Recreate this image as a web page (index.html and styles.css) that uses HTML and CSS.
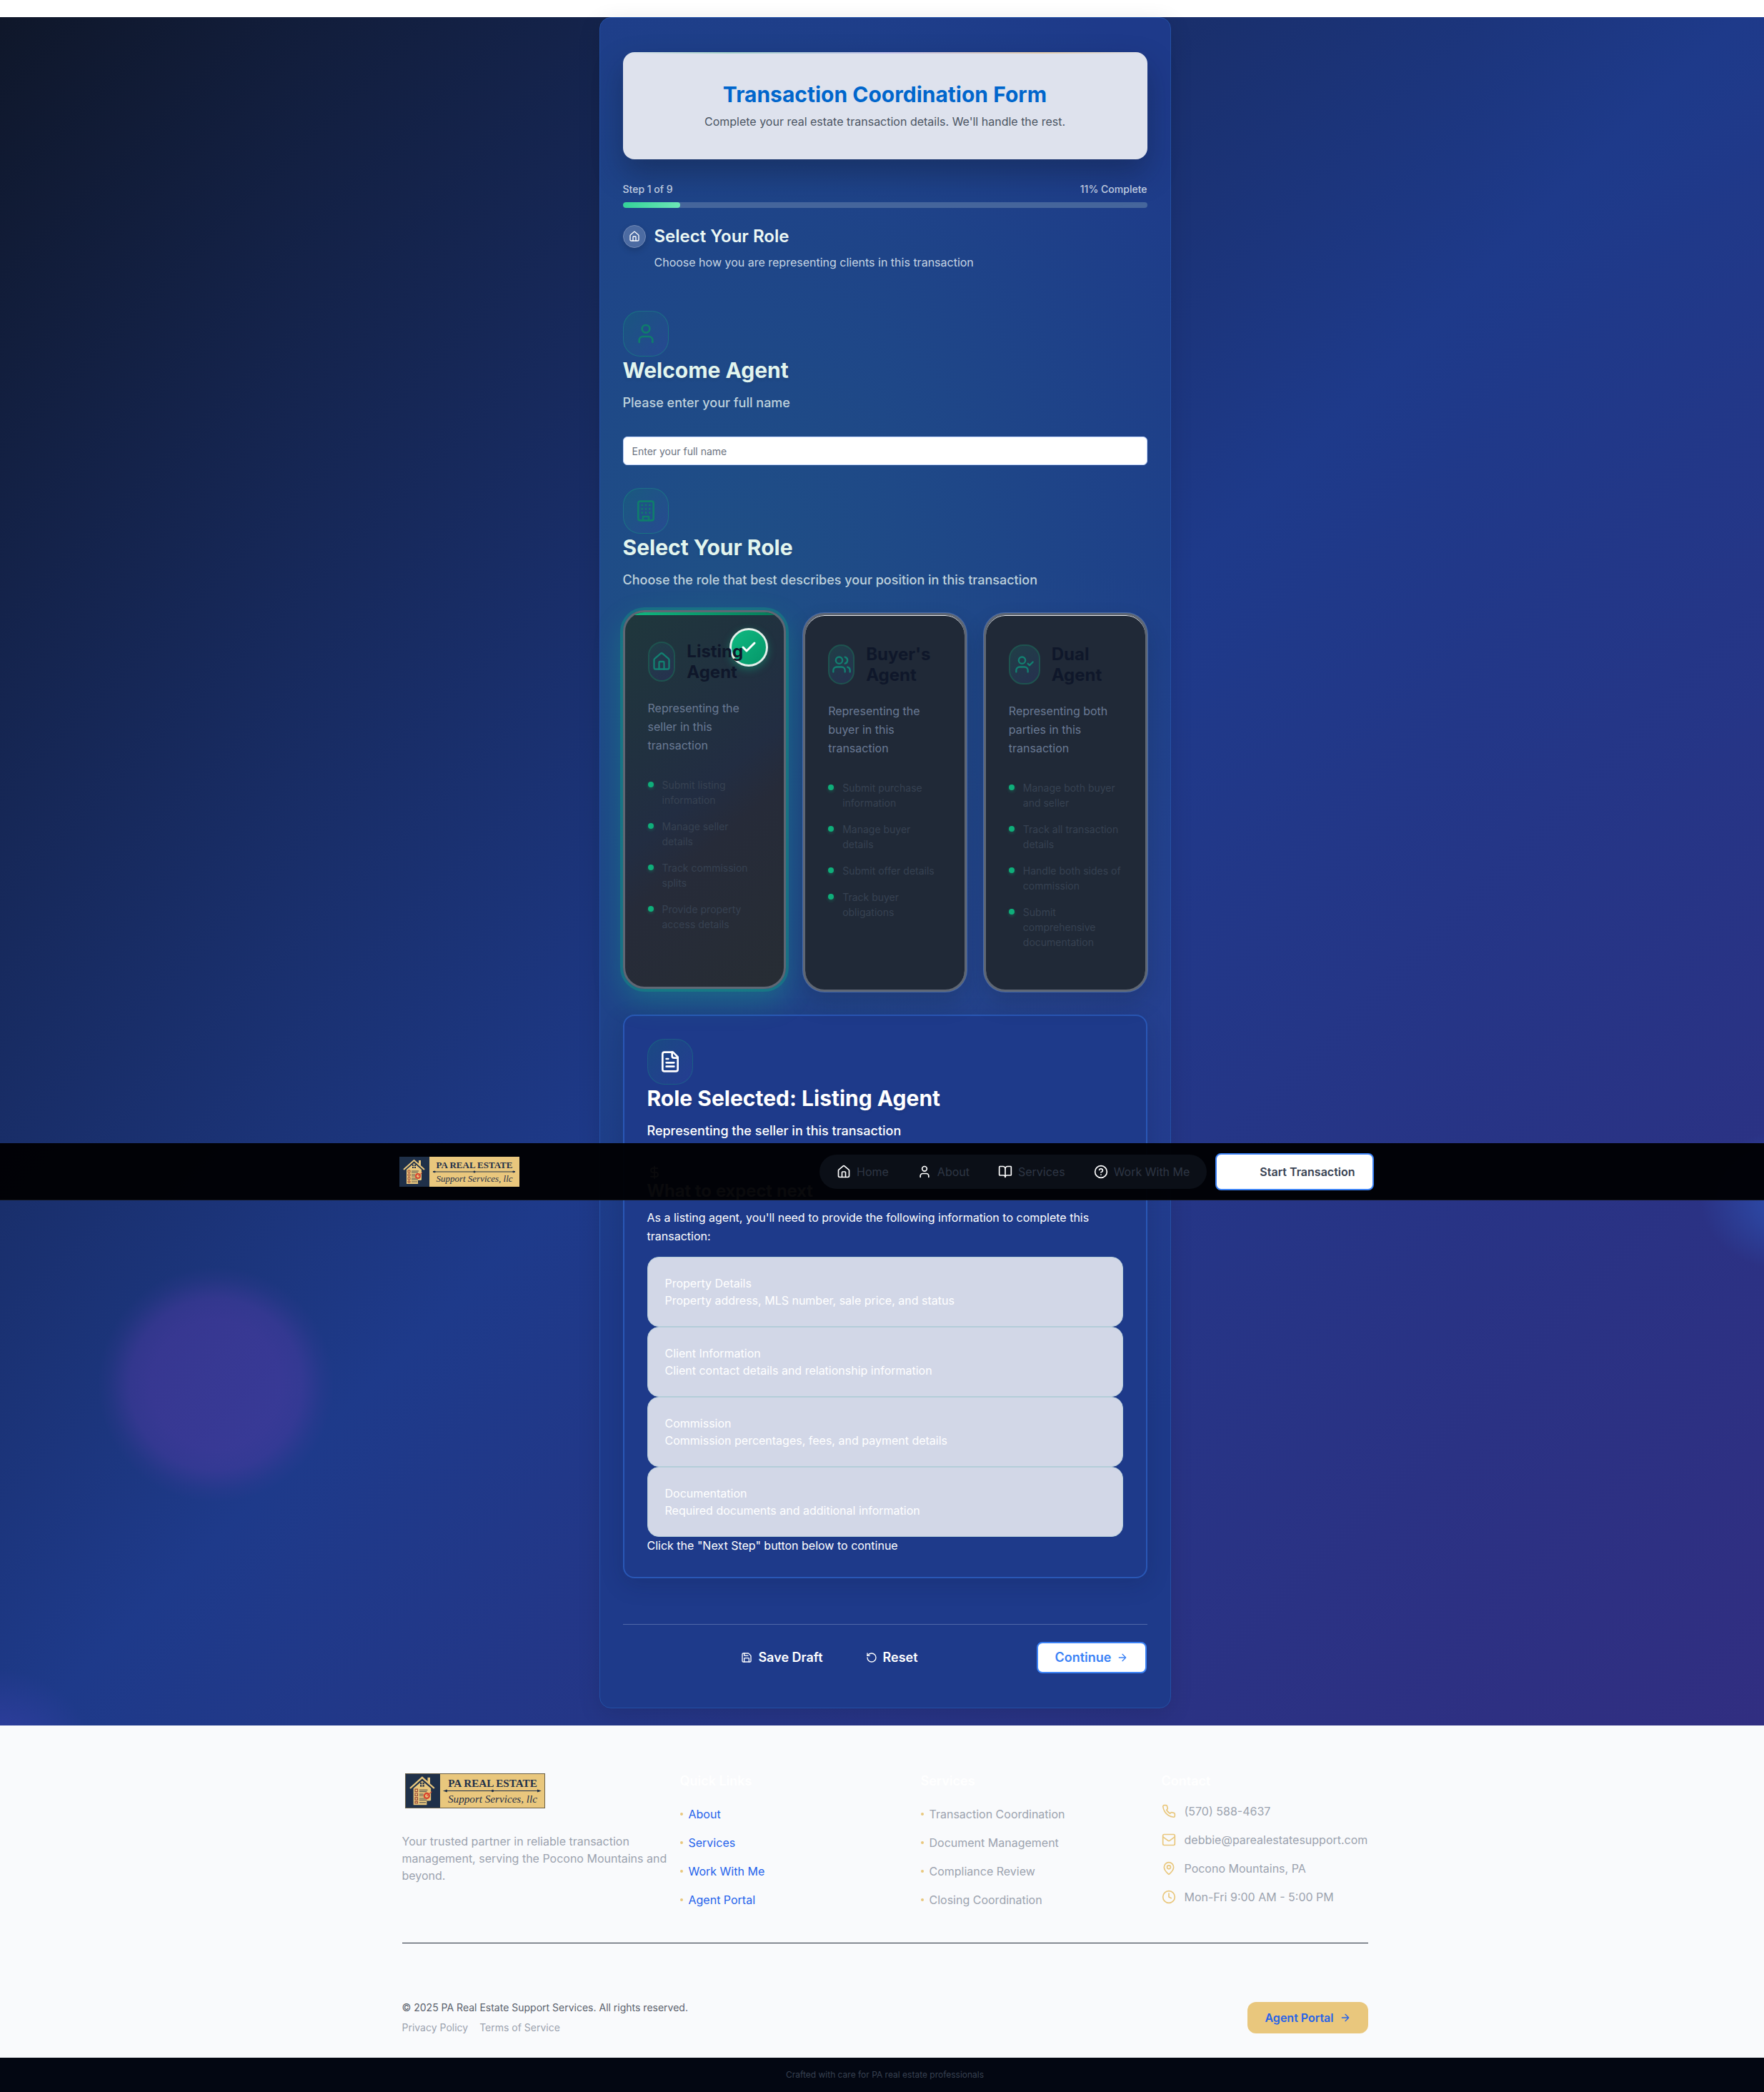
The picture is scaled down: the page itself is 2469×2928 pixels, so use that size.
FILE: index.html
```html
<!DOCTYPE html>
<html lang="en">
<head>
<meta charset="utf-8">
<meta name="viewport" content="width=device-width, initial-scale=1">
<title>Transaction Coordination Form | PA Real Estate Support Services</title>
<link rel="stylesheet" href="styles.css">
</head>
<body>
<svg class="sprite" aria-hidden="true">
  <symbol id="i-home" viewBox="0 0 24 24"><path d="M15 21v-8a1 1 0 0 0-1-1h-4a1 1 0 0 0-1 1v8"/><path d="M3 10a2 2 0 0 1 .709-1.528l7-5.999a2 2 0 0 1 2.582 0l7 5.999A2 2 0 0 1 21 10v9a2 2 0 0 1-2 2H5a2 2 0 0 1-2-2z"/></symbol>
  <symbol id="i-user" viewBox="0 0 24 24"><path d="M19 21v-2a4 4 0 0 0-4-4H9a4 4 0 0 0-4 4v2"/><circle cx="12" cy="7" r="4"/></symbol>
  <symbol id="i-building" viewBox="0 0 24 24"><rect x="4" y="2" width="16" height="20" rx="2"/><path d="M9 22v-4h6v4M8 6h.01M16 6h.01M12 6h.01M12 10h.01M12 14h.01M16 10h.01M16 14h.01M8 10h.01M8 14h.01"/></symbol>
  <symbol id="i-users" viewBox="0 0 24 24"><path d="M16 21v-2a4 4 0 0 0-4-4H6a4 4 0 0 0-4 4v2"/><circle cx="9" cy="7" r="4"/><path d="M22 21v-2a4 4 0 0 0-3-3.87M16 3.13a4 4 0 0 1 0 7.75"/></symbol>
  <symbol id="i-user-check" viewBox="0 0 24 24"><path d="M16 21v-2a4 4 0 0 0-4-4H6a4 4 0 0 0-4 4v2"/><circle cx="9" cy="7" r="4"/><path d="m16 11 2 2 4-4"/></symbol>
  <symbol id="i-file" viewBox="0 0 24 24"><path d="M15 2H6a2 2 0 0 0-2 2v16a2 2 0 0 0 2 2h12a2 2 0 0 0 2-2V7Z"/><path d="M14 2v4a2 2 0 0 0 2 2h4M10 9H8M16 13H8M16 17H8"/></symbol>
  <symbol id="i-check" viewBox="0 0 24 24"><path d="M20 6 9 17l-5-5"/></symbol>
  <symbol id="i-dollar" viewBox="0 0 24 24"><path d="M12 2v20M17 5H9.500a3.500 3.500 0 0 0 0 7h5a3.500 3.500 0 0 1 0 7H6"/></symbol>
  <symbol id="i-book" viewBox="0 0 24 24"><path d="M12 7v14"/><path d="M3 18a1 1 0 0 1-1-1V4a1 1 0 0 1 1-1h5a4 4 0 0 1 4 4 4 4 0 0 1 4-4h5a1 1 0 0 1 1 1v13a1 1 0 0 1-1 1h-6a3 3 0 0 0-3 3 3 3 0 0 0-3-3z"/></symbol>
  <symbol id="i-help" viewBox="0 0 24 24"><circle cx="12" cy="12" r="10"/><path d="M9.090 9a3 3 0 0 1 5.830 1c0 2-3 3-3 3M12 17h.01"/></symbol>
  <symbol id="i-save" viewBox="0 0 24 24"><path d="M15.200 3a2 2 0 0 1 1.400.6l3.800 3.800a2 2 0 0 1 .6 1.400V19a2 2 0 0 1-2 2H5a2 2 0 0 1-2-2V5a2 2 0 0 1 2-2z"/><path d="M17 21v-7a1 1 0 0 0-1-1H8a1 1 0 0 0-1 1v7M7 3v4a1 1 0 0 0 1 1h7"/></symbol>
  <symbol id="i-reset" viewBox="0 0 24 24"><path d="M3 12a9 9 0 1 0 9-9 9.750 9.750 0 0 0-6.740 2.740L3 8"/><path d="M3 3v5h5"/></symbol>
  <symbol id="i-arrow" viewBox="0 0 24 24"><path d="M5 12h14M12 5l7 7-7 7"/></symbol>
  <symbol id="i-phone" viewBox="0 0 24 24"><path d="M22 16.920v3a2 2 0 0 1-2.180 2 19.790 19.790 0 0 1-8.630-3.070 19.500 19.500 0 0 1-6-6 19.790 19.790 0 0 1-3.070-8.670A2 2 0 0 1 4.110 2h3a2 2 0 0 1 2 1.720 12.840 12.840 0 0 0 .7 2.810 2 2 0 0 1-.45 2.110L8.090 9.910a16 16 0 0 0 6 6l1.270-1.270a2 2 0 0 1 2.110-.45 12.840 12.840 0 0 0 2.810.7A2 2 0 0 1 22 16.920z"/></symbol>
  <symbol id="i-mail" viewBox="0 0 24 24"><rect x="2" y="3" width="20" height="18" rx="2"/><path d="m22 7-8.970 6.700a1.940 1.940 0 0 1-2.060 0L2 7"/></symbol>
  <symbol id="i-pin" viewBox="0 0 24 24"><path d="M20 10c0 5-5.540 10.190-7.400 11.800a1 1 0 0 1-1.200 0C9.540 20.190 4 15 4 10a8 8 0 0 1 16 0"/><circle cx="12" cy="10" r="3"/></symbol>
  <symbol id="i-clock" viewBox="0 0 24 24"><circle cx="12" cy="12" r="10"/><path d="M12 6v6l4 2"/></symbol>
  <symbol id="logo" viewBox="0 0 168 42">
    <rect width="168" height="42" fill="#e9c77d"/>
    <rect width="42" height="42" fill="#1f3049"/>
    <path d="M27 5h3v7h-3z" fill="#e9c77d"/>
    <path d="m6 18 14.500-13L35 18" fill="none" stroke="#e9c77d" stroke-width="2"/>
    <path d="M10 18 20.500 9 31 18v14l-5 6H10z" fill="#e9c77d"/>
    <path d="M18 11h5v5h-5z" fill="#1f3049"/>
    <path d="M20.500 11v5M18 13.500h5" stroke="#e9c77d" stroke-width="1"/>
    <path d="M17 20h10M17 22h9M17 25h5M17 27h5M17 30h7M17 32h9M17 35h8" stroke="#5b5a52" stroke-width="1"/>
    <path d="M12 19h3v3h-3zM12 24h3v3h-3zM12 29h3v3h-3zM12 34h3v2h-3z" fill="none" stroke="#9a4a38" stroke-width="1"/>
    <circle cx="26" cy="27" r="3" fill="none" stroke="#d8452f" stroke-width="2"/>
    <path d="m26 27 6-5" stroke="#d8452f" stroke-width="1"/>
    <path d="M26 38v-5h5z" fill="#1f3049"/>
    <text x="105" y="16" text-anchor="middle" class="logo-name">PA REAL ESTATE</text>
    <path d="M47 21h115M47 21l3-1v2zM162 21l-3-1v2z" stroke="#1f3049" stroke-width="1" fill="#1f3049"/>
    <circle cx="105" cy="21" r="1.500" fill="#1f3049"/>
    <text x="105" y="35" text-anchor="middle" class="logo-script">Support Services, llc</text>
  </symbol>
</svg>

<div class="page">
  <header class="navbar">
    <div class="navbar-inner">
      <a class="brand" href="#"><svg class="logo-sm" role="img" aria-label="PA Real Estate Support Services, llc"><use href="#logo"/></svg></a>
      <nav class="nav-pill">
        <a href="#"><svg class="icon s20"><use href="#i-home"/></svg><span>Home</span></a>
        <a href="#"><svg class="icon s20"><use href="#i-user"/></svg><span>About</span></a>
        <a href="#"><svg class="icon s20"><use href="#i-book"/></svg><span>Services</span></a>
        <a href="#"><svg class="icon s20"><use href="#i-help"/></svg><span>Work With Me</span></a>
      </nav>
      <a class="cta" href="#">Start Transaction</a>
    </div>
  </header>

  <main class="stage">
    <form class="shell">
      <div class="form-head">
        <h1>Transaction Coordination Form</h1>
        <p>Complete your real estate transaction details. We'll handle the rest.</p>
      </div>

      <div class="progress">
        <div class="progress-labels"><span>Step 1 of 9</span><span>11% Complete</span></div>
        <div class="track"><div class="fill" style="width:11%"></div></div>
        <div class="step">
          <span class="step-icon"><svg class="icon s16"><use href="#i-home"/></svg></span>
          <h2>Select Your Role</h2>
          <p>Choose how you are representing clients in this transaction</p>
        </div>
      </div>

      <section class="block">
        <span class="tile"><svg class="icon s32"><use href="#i-user"/></svg></span>
        <h2 class="title">Welcome Agent</h2>
        <p class="sub" id="name-label">Please enter your full name</p>
        <input class="field" type="text" aria-labelledby="name-label" placeholder="Enter your full name">
      </section>

      <section class="block">
        <span class="tile"><svg class="icon s32"><use href="#i-building"/></svg></span>
        <h2 class="title">Select Your Role</h2>
        <p class="sub">Choose the role that best describes your position in this transaction</p>
        <div class="roles">
          <label class="role selected">
            <input type="radio" name="role" checked>
            <span class="badge"><svg class="icon s24"><use href="#i-check"/></svg></span>
            <span class="role-head"><span class="role-icon"><svg class="icon s28"><use href="#i-home"/></svg></span><span class="role-name">Listing Agent</span></span>
            <span class="role-desc">Representing the seller in this transaction</span>
            <span class="role-list"><span>Submit listing information</span><span>Manage seller details</span><span>Track commission splits</span><span>Provide property access details</span></span>
          </label>
          <label class="role">
            <input type="radio" name="role">
            <span class="role-head"><span class="role-icon"><svg class="icon s28"><use href="#i-users"/></svg></span><span class="role-name">Buyer's Agent</span></span>
            <span class="role-desc">Representing the buyer in this transaction</span>
            <span class="role-list"><span>Submit purchase information</span><span>Manage buyer details</span><span>Submit offer details</span><span>Track buyer obligations</span></span>
          </label>
          <label class="role">
            <input type="radio" name="role">
            <span class="role-head"><span class="role-icon"><svg class="icon s28"><use href="#i-user-check"/></svg></span><span class="role-name">Dual Agent</span></span>
            <span class="role-desc">Representing both parties in this transaction</span>
            <span class="role-list"><span>Manage both buyer and seller</span><span>Track all transaction details</span><span>Handle both sides of commission</span><span>Submit comprehensive documentation</span></span>
          </label>
        </div>
      </section>

      <section class="panel">
        <span class="tile"><svg class="icon s32"><use href="#i-file"/></svg></span>
        <h2 class="title">Role Selected: Listing Agent</h2>
        <p class="sub">Representing the seller in this transaction</p>
        <svg class="icon s20 dollar"><use href="#i-dollar"/></svg>
        <h3>What to expect next</h3>
        <p class="lead">As a listing agent, you'll need to provide the following information to complete this transaction:</p>
        <div class="info"><h4>Property Details</h4><p>Property address, MLS number, sale price, and status</p></div>
        <div class="info"><h4>Client Information</h4><p>Client contact details and relationship information</p></div>
        <div class="info"><h4>Commission</h4><p>Commission percentages, fees, and payment details</p></div>
        <div class="info"><h4>Documentation</h4><p>Required documents and additional information</p></div>
        <p>Click the "Next Step" button below to continue</p>
      </section>

      <div class="actions">
        <span></span>
        <div class="actions-mid">
          <button type="button" class="btn"><svg class="icon s16"><use href="#i-save"/></svg>Save Draft</button>
          <button type="reset" class="btn"><svg class="icon s16"><use href="#i-reset"/></svg>Reset</button>
        </div>
        <button type="submit" class="btn primary">Continue<svg class="icon s16"><use href="#i-arrow"/></svg></button>
      </div>
    </form>
  </main>

  <footer class="footer">
    <div class="footer-inner">
      <div class="footer-grid">
        <div>
          <svg class="logo-lg" role="img" aria-label="PA Real Estate Support Services, llc"><use href="#logo"/></svg>
          <p class="about">Your trusted partner in reliable transaction management, serving the Pocono Mountains and beyond.</p>
        </div>
        <div>
          <h3>Quick Links</h3>
          <ul class="links blue"><li><a href="#">About</a></li><li><a href="#">Services</a></li><li><a href="#">Work With Me</a></li><li><a href="#">Agent Portal</a></li></ul>
        </div>
        <div>
          <h3>Services</h3>
          <ul class="links"><li>Transaction Coordination</li><li>Document Management</li><li>Compliance Review</li><li>Closing Coordination</li></ul>
        </div>
        <div>
          <h3>Contact</h3>
          <ul class="contact">
            <li><svg class="icon s20"><use href="#i-phone"/></svg>(570) 588-4637</li>
            <li><svg class="icon s20"><use href="#i-mail"/></svg>debbie@parealestatesupport.com</li>
            <li><svg class="icon s20"><use href="#i-pin"/></svg>Pocono Mountains, PA</li>
            <li><svg class="icon s20"><use href="#i-clock"/></svg>Mon-Fri 9:00 AM - 5:00 PM</li>
          </ul>
        </div>
      </div>
      <div class="footer-bottom">
        <div>
          <p class="copy">© 2025 PA Real Estate Support Services. All rights reserved.</p>
          <p class="legal"><a href="#">Privacy Policy</a><a href="#">Terms of Service</a></p>
        </div>
        <a class="portal" href="#">Agent Portal<svg class="icon s16"><use href="#i-arrow"/></svg></a>
      </div>
    </div>
    <div class="credit">Crafted with care for PA real estate professionals</div>
  </footer>
</div>
</body>
</html>
```
FILE: styles.css
```css
*, *::before, *::after { box-sizing: border-box; }
html { overflow-x: hidden; }
body { margin: 0; background: #fff; font-family: Inter, "Liberation Sans", sans-serif; font-size: 16px; line-height: 24px; overflow-x: hidden; }
h1, h2, h3, h4, p, ul { margin: 0; padding: 0; }
ul { list-style: none; }
a { color: inherit; text-decoration: none; }
.sprite { display: none; }
.page { position: relative; padding-top: 24px; margin-right: -8px; }

.icon { display: block; flex: none; fill: none; stroke: currentColor; stroke-width: 2; stroke-linecap: round; stroke-linejoin: round; }
.s16 { width: 16px; height: 16px; }
.s20 { width: 20px; height: 20px; }
.s24 { width: 24px; height: 24px; }
.s28 { width: 28px; height: 28px; }
.s32 { width: 32px; height: 32px; }
.logo-name { font: bold 13px "Liberation Serif", serif; fill: #1f3049; }
.logo-script { font: italic 13px "Liberation Serif", serif; fill: #1f3049; }

/* Floating site bar */
.navbar { position: absolute; top: 1600px; left: 0; right: 0; z-index: 10; background: rgba(0, 0, 2, .96); border-bottom: 1px solid #14161b; }
.navbar-inner { max-width: 1400px; height: 79px; margin: 0 auto; padding: 0 16px; display: flex; align-items: center; gap: 12px; }
.brand { margin: 0 auto 0 4px; }
.logo-sm { display: block; width: 168px; height: 42px; }
.nav-pill { display: flex; gap: 8px; padding: 4px 8px; border-radius: 24px; background: #0b0f17; color: #2e3644; }
.nav-pill a { display: flex; align-items: center; gap: 8px; height: 40px; padding: 0 16px; }
.nav-pill .icon { color: #fff; }
.cta { height: 52px; padding: 0 24px 0 60px; border: 2px solid #3b82f6; border-radius: 8px; background: #fff; color: #374151; font-weight: 600; line-height: 48px; }

/* Form stage */
.stage {
  padding-bottom: 24px;
  background:
    radial-gradient(circle at 302px 1914px, rgba(80, 58, 164, .52) 90px, rgba(80, 58, 164, .44) 120px, rgba(80, 58, 164, .12) 148px, transparent 165px),
    radial-gradient(circle at -10px 2460px, rgba(56, 64, 168, .6) 60px, transparent 150px),
    radial-gradient(ellipse 130px 100px at 2510px 1656px, rgba(45, 90, 190, .6) 20%, transparent),
    linear-gradient(135deg, #0f172a 0%, #1e3a8a 50%, #312e81 100%);
}
.shell {
  max-width: 800px; margin: 0 auto; padding: 48px 32px; border: 1px solid #2350a5; border-radius: 16px;
  background:
    radial-gradient(ellipse 900px 1000px at 20% 34%, rgba(32, 110, 128, .42), transparent),
    radial-gradient(ellipse 700px 600px at 80% 58%, rgba(70, 80, 170, .22), transparent),
    #1e3a8a;
  box-shadow: 0 8px 32px rgba(0, 0, 0, .12);
}
.form-head {
  position: relative; padding: 41px; border-radius: 16px; background: #dee2ed; text-align: center;
  box-shadow: 0 20px 40px rgba(15, 23, 42, .35);
}
.form-head::before {
  content: ""; position: absolute; top: 0; left: 0; right: 0; height: 2px; border-radius: 16px 16px 0 0; opacity: .5;
  background: linear-gradient(90deg, transparent, #6cc5a6 20%, #a5a0e6 50%, #e9b765 80%, transparent);
}
.form-head h1 { font-size: 30px; line-height: 36px; font-weight: 700; color: #0066cc; }
.form-head p { margin-top: 8px; color: #4b5563; }
.progress { margin-top: 32px; }
.progress-labels { display: flex; justify-content: space-between; font-size: 14px; line-height: 20px; font-weight: 500; color: #c7d4e6; }
.track { height: 8px; margin-top: 8px; border-radius: 4px; background: #46669c; overflow: hidden; }
.fill { height: 8px; border-radius: 4px; background: linear-gradient(90deg, #34d399, #6ee7b7); }
.step { display: grid; grid-template-columns: 32px 1fr; column-gap: 12px; row-gap: 8px; margin-top: 24px; align-items: center; }
.step-icon { display: grid; place-items: center; width: 32px; height: 32px; border: 1px solid #7188b4; border-radius: 50%; background: #4c6ba2; color: #fff; box-shadow: 0 4px 8px rgba(0, 0, 0, .15); }
.step h2 { font-size: 24px; line-height: 32px; font-weight: 600; color: #ecf8f4; }
.step p { grid-column: 2; color: #c6d5e3; }

.block { margin-top: 32px; }
.progress + .block { margin-top: 56px; }
.tile { display: grid; place-items: center; width: 64px; height: 64px; border: 1px solid rgba(16, 185, 129, .3); border-radius: 24px; color: #0f7d6c; background: linear-gradient(135deg, rgba(16, 120, 110, .3), rgba(60, 70, 170, .3)); }
.title { font-size: 30px; line-height: 39px; font-weight: 700; color: #e2f5ee; text-shadow: 0 2px 4px rgba(0, 0, 0, .1); }
.sub { margin-top: 12px; font-size: 18px; line-height: 28px; font-weight: 500; color: #bfd2dc; }
.field { display: block; width: 100%; height: 40px; margin-top: 33px; padding: 0 12px; border: 1px solid #bfd3fb; border-radius: 6px; background: #fff; font: 14px/20px Inter, "Liberation Sans", sans-serif; color: #111827; }
.field::placeholder { color: #6b7280; opacity: 1; }

.roles { display: grid; grid-template-columns: repeat(3, minmax(0, 1fr)); gap: 24px; margin-top: 32px; }
.role {
  position: relative; padding: 40px 32px; border: 3px solid #5f6774; border-radius: 30px; background: #202937;
  box-shadow: 0 0 0 1px #4769a8, inset 0 1px 0 #e5e7eb, 0 16px 32px rgba(15, 23, 42, .2);
}
.role > input { position: absolute; opacity: 0; margin: 0; }
.role.selected {
  top: -4px;
  background: linear-gradient(140deg, #1f373c 0%, #222d42 48%, #262b39 60%, #272d34 100%);
  box-shadow: 0 0 0 4px rgba(16, 185, 129, .28), 0 16px 40px rgba(16, 185, 129, .32);
}
.role.selected::before { content: ""; position: absolute; inset: 0; border-radius: 27px; background: linear-gradient(90deg, #10b981, #047857) top / 100% 4px no-repeat; }
.badge { position: absolute; top: 22px; right: 22px; display: grid; place-items: center; width: 54px; height: 54px; border: 3px solid #e3efea; border-radius: 50%; background: linear-gradient(135deg, #10b981, #059669); color: #fff; box-shadow: 0 4px 12px rgba(16, 185, 129, .4); }
.badge .icon { stroke-width: 3; }
.role-head { position: relative; display: flex; align-items: center; gap: 16px; }
.role-icon { display: flex; align-items: center; justify-content: center; width: 56px; min-width: 0; height: 56px; border: 2px solid #1e534f; border-radius: 20px; background: linear-gradient(145deg, #203f47, #26304f); color: #128071; }
.role-name { font-size: 24px; line-height: 29px; font-weight: 700; color: #0f172a; }
.role-desc { display: block; margin-top: 23px; font-size: 16px; line-height: 26px; color: #6a7a94; }
.role-list { display: block; margin-top: 32px; font-size: 14px; line-height: 21px; color: #374252; }
.role-list > span { position: relative; display: block; margin-bottom: 16px; padding-left: 20px; }
.role-list > span::before { content: ""; position: absolute; left: 0; top: 6px; width: 8px; height: 8px; border-radius: 50%; background: #0fae7a; box-shadow: 0 2px 4px rgba(16, 185, 129, .3); }

.panel { margin-top: 32px; padding: 32px; border: 2px solid #2957b5; border-radius: 16px; background: #1e3a8a; color: #fff; box-shadow: 0 8px 32px rgba(15, 23, 62, .2); }
.panel .tile { color: #fff; background: linear-gradient(135deg, rgba(16, 120, 110, .25), rgba(60, 70, 170, .25)); border-color: rgba(16, 185, 129, .22); }
.panel .title, .panel .sub { color: #fff; }
.dollar { margin-top: 34px; }
.panel h3 { font-size: 24px; line-height: 32px; font-weight: 600; }
.lead { margin: 8px 0 16px; line-height: 26px; }
.info { padding: 24px; border: 1px solid #b4cdd9; border-radius: 16px; background: #d2d7e7; color: #fff; }
.info h4 { font-size: 16px; font-weight: 400; }

.actions { display: flex; justify-content: space-between; align-items: center; margin-top: 64px; padding-top: 24px; border-top: 1px solid #5069a8; }
.actions-mid { display: flex; gap: 8px; }
.btn { display: flex; align-items: center; gap: 8px; height: 44px; padding: 0 24px; border: 2px solid transparent; border-radius: 8px; background: none; color: #fff; font: 600 18px/24px Inter, "Liberation Sans", sans-serif; }
.btn.primary { border-color: #3b82f6; background: #fff; color: #3b82f6; }

/* Footer */
.footer { background: #f9fafc; color: #9ca3af; }
.footer-inner { max-width: 1400px; margin: 0 auto; padding: 64px 24px 32px; }
.footer-grid { display: grid; grid-template-columns: 373fr 321fr 321fr 289fr; gap: 16px; padding-bottom: 44px; border-bottom: 1px solid #1f2937; }
.logo-lg { display: block; width: 196px; height: 49px; margin: 3px 0 0 4px; outline: 1px solid #6b6048; outline-offset: -1px; }
.about { margin-top: 34px; }
.footer h3 { margin-bottom: 16px; font-size: 18px; line-height: 28px; font-weight: 600; color: #fff; }
.links { display: grid; gap: 8px; }
.links li { display: flex; align-items: center; gap: 8px; height: 32px; }
.links li::before { content: ""; width: 4px; height: 4px; border-radius: 50%; background: #e9c77d; }
.blue { color: #2563eb; }
.contact { display: grid; gap: 16px; }
.contact li { display: flex; align-items: center; gap: 12px; white-space: nowrap; }
.contact .icon { color: #e9c77d; }
.footer-bottom { display: flex; justify-content: space-between; align-items: center; padding-top: 80px; font-size: 14px; line-height: 20px; }
.copy { color: #5b626d; }
.legal { display: flex; gap: 16px; margin-top: 8px; }
.portal { display: flex; align-items: center; gap: 8px; height: 44px; padding: 0 24px; border-radius: 12px; background: #e9c77d; color: #2563eb; font-size: 16px; font-weight: 600; }
.credit { height: 48px; background: #030712; color: #374151; text-align: center; font-size: 12px; line-height: 48px; }
```
